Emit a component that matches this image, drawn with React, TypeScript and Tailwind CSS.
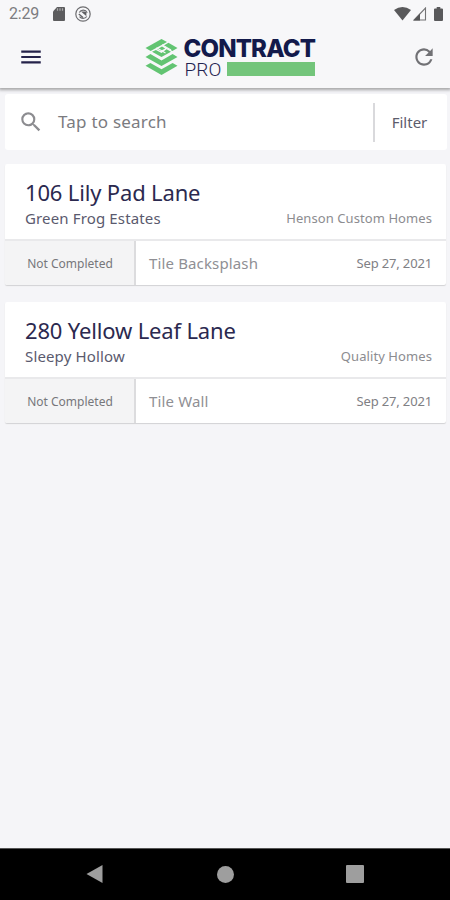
import React from 'react';
import { MdMenu, MdRefresh, MdSearch } from 'react-icons/md';

type Job = {
  address: string;
  community: string;
  builder: string;
  status: string;
  task: string;
  date: string;
};

const jobs: Job[] = [
  {
    address: '106 Lily Pad Lane',
    community: 'Green Frog Estates',
    builder: 'Henson Custom Homes',
    status: 'Not Completed',
    task: 'Tile Backsplash',
    date: 'Sep 27, 2021',
  },
  {
    address: '280 Yellow Leaf Lane',
    community: 'Sleepy Hollow',
    builder: 'Quality Homes',
    status: 'Not Completed',
    task: 'Tile Wall',
    date: 'Sep 27, 2021',
  },
];

function StatusBar() {
  return (
    <div className="flex h-7 items-center pl-[9px] pr-[7px] font-[Roboto,sans-serif] text-[#7c7c80]">
      <span className="text-[16px] leading-7 tracking-[-0.2px]">2:29</span>
      <svg className="ml-[14px]" width="12" height="14" viewBox="0 0 12 14">
        <path d="M4 0h7a1 1 0 0 1 1 1v12a1 1 0 0 1-1 1H1a1 1 0 0 1-1-1V4.500z" fill="#5c5c5e" />
        <path d="M4.500 1.200v2.600M7 1.200v2.600M9.500 1.200v2.600" stroke="#aaaaac" strokeWidth="1.200" />
      </svg>
      <svg className="ml-[10px]" width="16" height="16" viewBox="0 0 16 16" fill="none">
        <circle cx="8" cy="8" r="7.200" stroke="#6d6d70" strokeWidth="1.200" />
        <path d="M4.300 6.500a4.400 4.400 0 0 1 7.900.200M11.800 10.500a4.600 4.600 0 0 1-7.300.200" stroke="#6d6d70" strokeWidth="1.200" />
        <path d="M6 5.600h3.400a2 2 0 0 1 2 2v2.600z" fill="#606063" />
        <path d="M3.800 8 8 11.500" stroke="#606063" strokeWidth="1.300" />
      </svg>
      <div className="grow" />
      <svg width="17" height="14" viewBox="0 0 17 14">
        <path d="M0 3Q8.500-3 17 3L8.500 13.500z" fill="#59595b" />
      </svg>
      <svg className="ml-[2px]" width="14" height="14" viewBox="0 0 14 14">
        <path d="M12.500 1v12H1z" fill="none" stroke="#737375" strokeWidth="1.100" />
        <path d="M7 6.500V13.500H.500z" fill="#555557" />
      </svg>
      <svg className="ml-[7px]" width="9" height="14" viewBox="0 0 9 14">
        <path d="M2.700 0h3.600v1.400H8a1 1 0 0 1 1 1V13a1 1 0 0 1-1 1H1a1 1 0 0 1-1-1V2.400a1 1 0 0 1 1-1h1.700z" fill="#59595b" />
      </svg>
    </div>
  );
}

function Logo() {
  return (
    <div className="flex items-start">
      <svg className="mt-[2px]" width="33" height="36" viewBox="0 0 33 36">
        <g fill="#62c472">
          <path d="M16.500 0 22 3 5.700 12.100.500 9z" />
          <path d="M23.400 3.800 32.500 9l-5.100 2.900-9-5.200z" />
          <path d="M17 7.600 20.200 9.400 15.500 12.100 12.200 10.300z" />
          <path d="M21.600 10.200 26 12.700 16.500 18 7 12.800 10.900 11l5.600 2.900z" />
          <path d="M.500 17.900 5.400 15.100 16.500 21.400 27.600 15.100 32.500 17.900 16.500 27z" />
          <path d="M.500 26.800 5.400 24 16.500 30.300 27.600 24 32.500 26.800 16.500 36z" />
        </g>
        <path d="M11.500 8.800 20.500 14M17 5.800 26 11" stroke="#f7f7f9" strokeWidth="1.100" />
      </svg>
      <div className="ml-[6px] w-[132px]">
        <div className="h-[25px] whitespace-nowrap font-[Inter,sans-serif] text-[24px] font-extrabold leading-[24px] tracking-[-0.85px] text-[#131a4b]">
          CONTRACT
        </div>
        <div className="flex items-start">
          <span className="w-[43px] whitespace-nowrap pl-px font-[Roboto,sans-serif] text-[19px] font-light leading-[15px] tracking-[0.1px] text-[#1f2350]">
            PRO
          </span>
          <span className="h-[14px] w-[88px] bg-[#73c57b]" />
        </div>
      </div>
    </div>
  );
}

function JobCard({ job }: { job: Job }) {
  return (
    <article className="h-[121px] w-[441px] overflow-hidden rounded-[2px] bg-white shadow-[0_1px_1px_#d2d2d4]">
      <div className="h-[75px] pl-5 pr-[14px] pt-[14px]">
        <h2 className="h-[29px] whitespace-nowrap text-[22px] font-normal leading-[28px] tracking-[-0.16px] text-[#2b294f]">
          {job.address}
        </h2>
        <div className="flex h-[23px] items-center justify-between whitespace-nowrap">
          <span className="text-[15px] tracking-[0.14px] text-[#5a5a6e]">{job.community}</span>
          <span className="pt-px text-[13px] tracking-[0.08px] text-[#8c8c90]">{job.builder}</span>
        </div>
      </div>
      <div className="flex h-[46px] items-stretch whitespace-nowrap border-t-2 border-[#e9e9eb]">
        <div className="flex w-[131px] items-center justify-center border-r-2 border-[#dcdcde] bg-[#f4f4f5] text-[12px] text-[#77777b]">
          <span className="pl-px pt-px">{job.status}</span>
        </div>
        <div className="flex grow items-center justify-between pl-[13px] pr-[14px]">
          <span className="text-[15px] tracking-[0.14px] text-[#8f8f94]">{job.task}</span>
          <span className="pt-px text-[13px] tracking-[-0.15px] text-[#808084]">{job.date}</span>
        </div>
      </div>
    </article>
  );
}

export default function App() {
  return (
    <div className="flex h-[900px] w-[450px] flex-col overflow-hidden bg-[#f5f5f8] font-['Noto_Sans',sans-serif]">
      <header className="h-[88px] shrink-0 bg-[#f7f7f9] shadow-[0_1px_3px_1px_#a4a4a6]">
        <StatusBar />
        <div className="flex h-[60px] justify-between pl-[18px] pr-[13px]">
          <MdMenu className="mt-[16px] text-[#25224a]" size={26} />
          <div className="mt-[9px] pl-[5px]">
            <Logo />
          </div>
          <MdRefresh className="mt-[16px] text-[#717175]" size={26} />
        </div>
      </header>
      <main className="flex grow flex-col pl-[5px] pt-[6px]">
        <div className="flex h-[56px] w-[442px] items-center rounded-[3px] bg-white">
          <MdSearch className="ml-[13px] text-[#8c8c90]" size={26} />
          <span className="ml-[14px] grow text-[17px] tracking-[0.22px] text-[#7b7b7f]">Tap to search</span>
          <span className="h-[39px] w-[2px] bg-[#d9d9dc]" />
          <button className="w-[72px] pr-[3px] text-[15px] text-[#5c5c6c]">Filter</button>
        </div>
        <section className="mt-[14px] flex flex-col gap-[17px]">
          {jobs.map((job) => (
            <JobCard key={job.address} job={job} />
          ))}
        </section>
      </main>
      <nav className="flex h-[52px] shrink-0 items-center justify-between border-t border-[#555] bg-black pb-px pl-[86px] pr-[86px]">
        <svg width="17" height="18" viewBox="0 0 17 18">
          <path d="M.500 9 16.500 0v18z" fill="#9e9e9e" />
        </svg>
        <span className="ml-px h-[17px] w-[17px] rounded-full bg-[#9e9e9e]" />
        <span className="h-[18px] w-[18px] rounded-[1px] bg-[#9e9e9e]" />
      </nav>
    </div>
  );
}
